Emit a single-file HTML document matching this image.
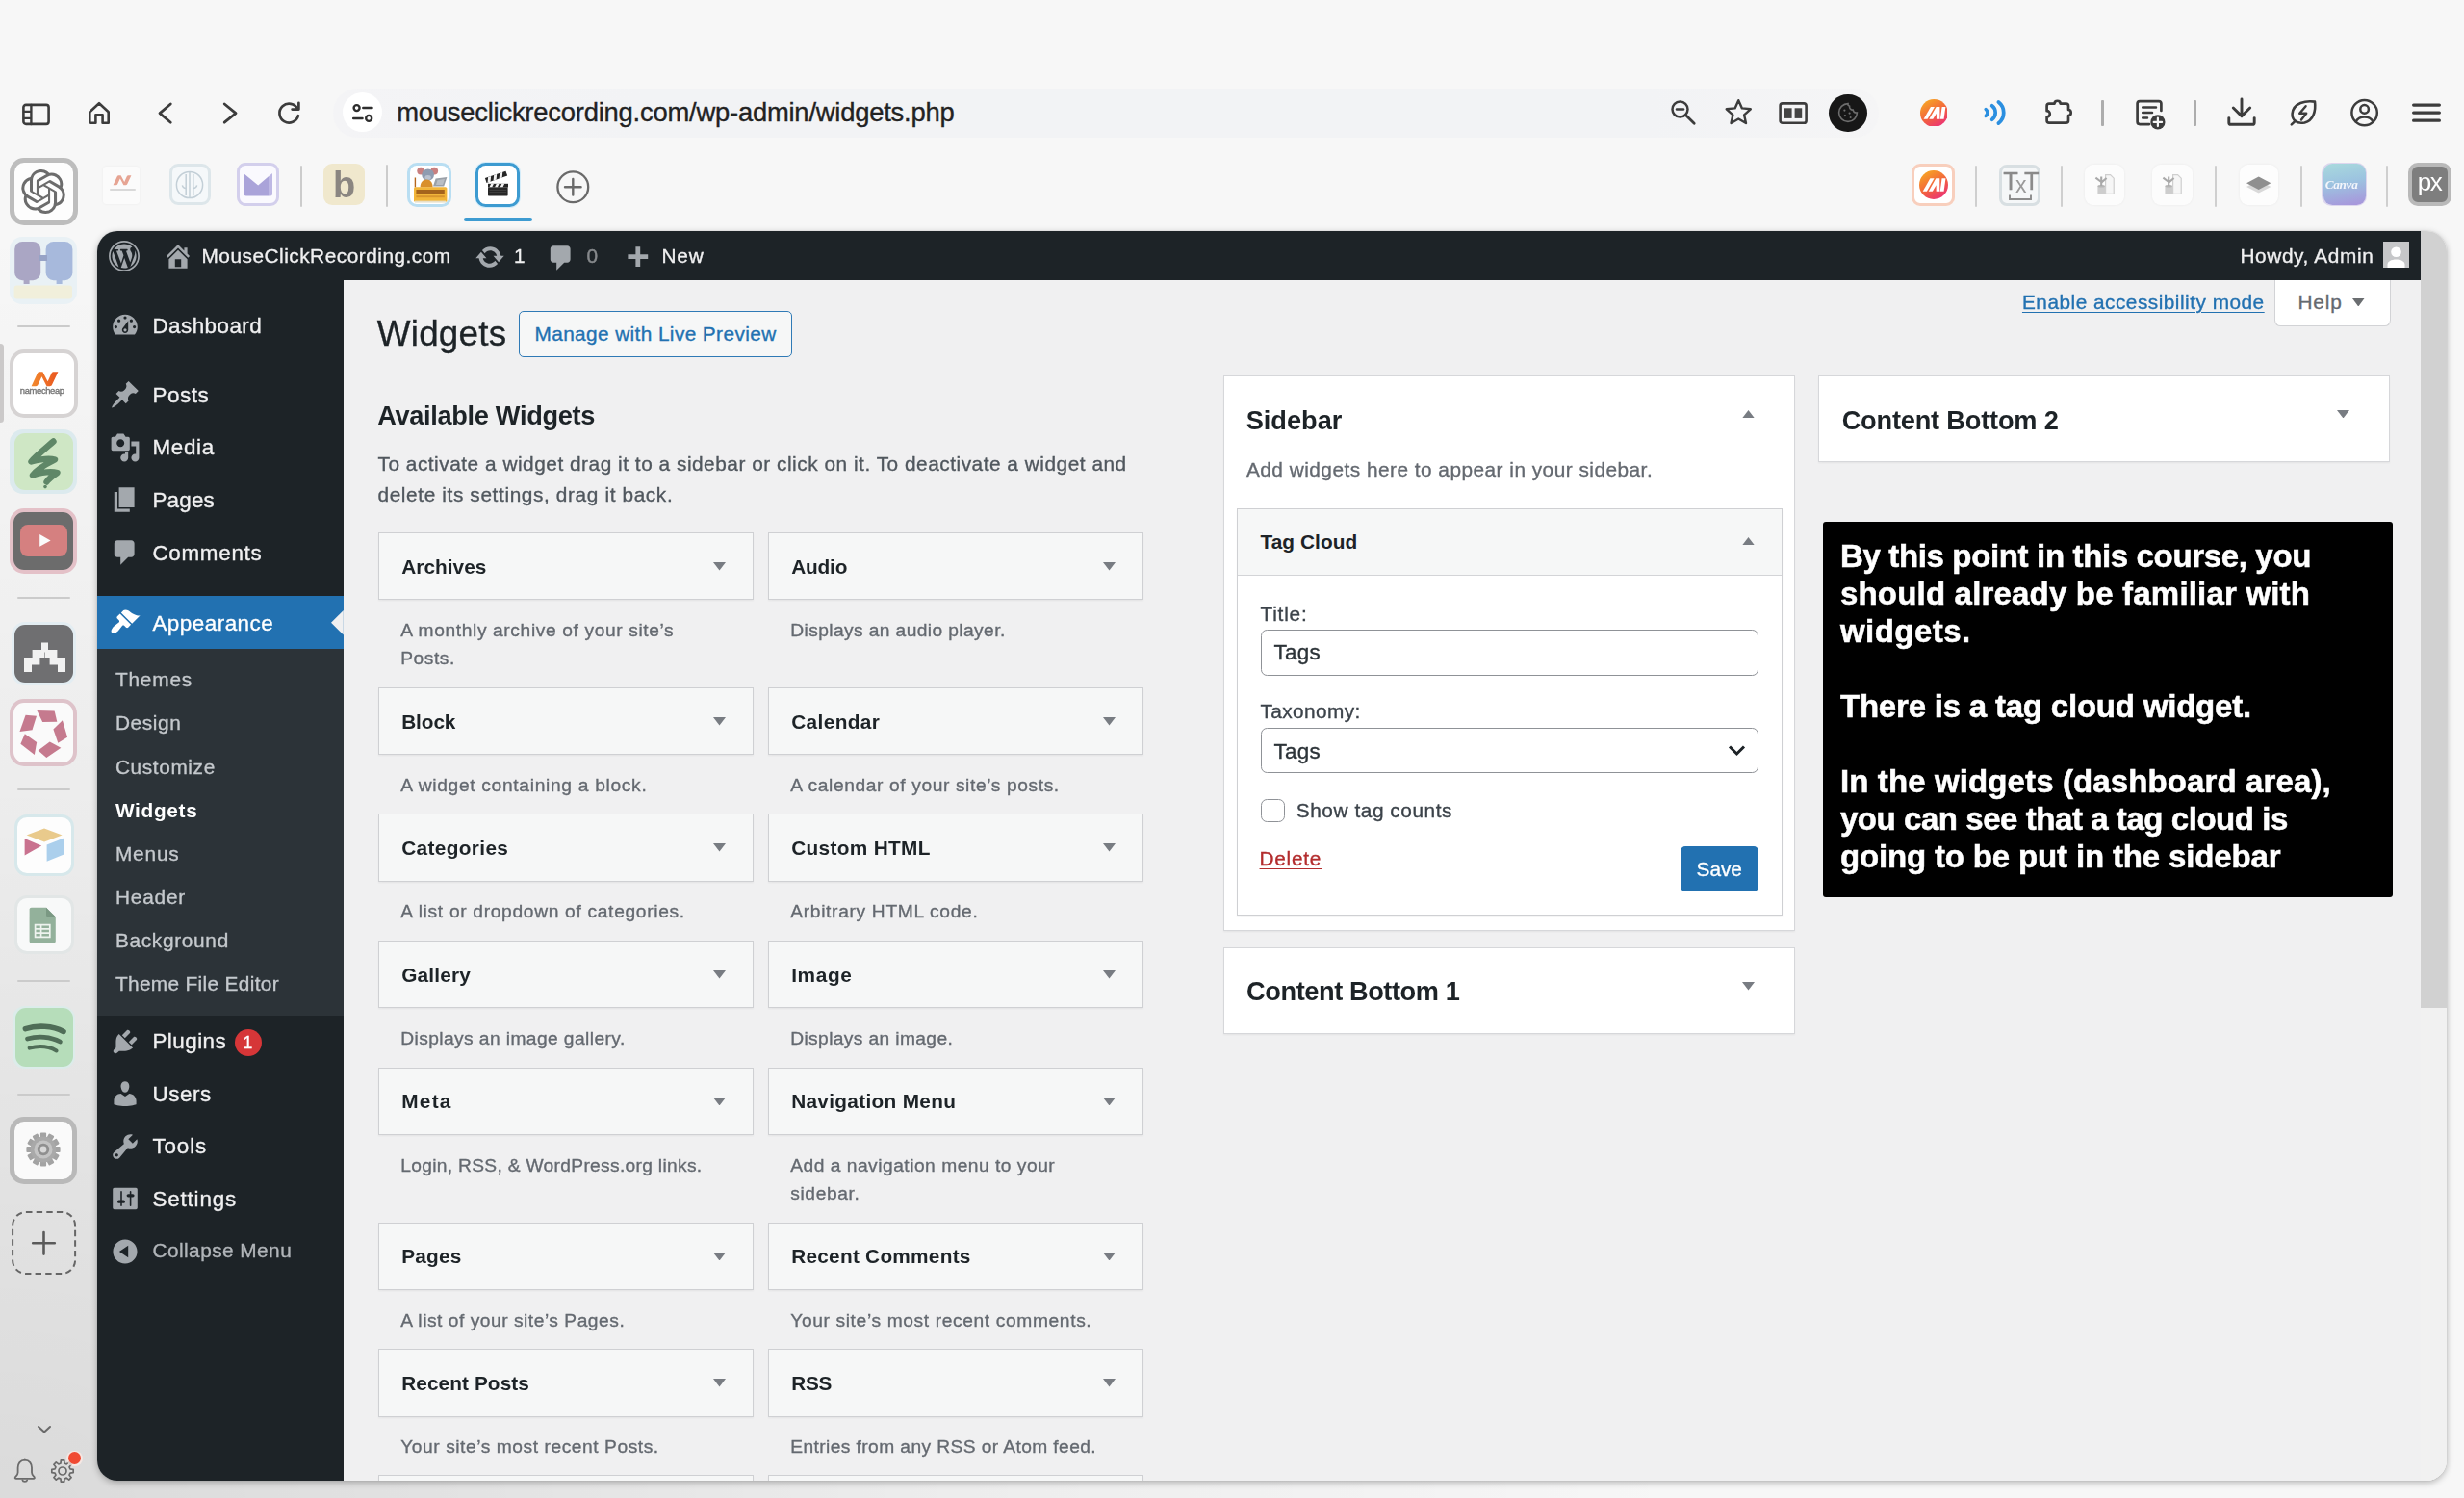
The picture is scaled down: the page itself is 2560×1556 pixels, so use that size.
<!DOCTYPE html>
<html><head><meta charset="utf-8"><title>Widgets</title>
<style>
html,body{margin:0;padding:0;}
body{width:2560px;height:1556px;position:relative;overflow:hidden;font-family:"Liberation Sans",sans-serif;
background:radial-gradient(ellipse 1750px 1350px at 0px 1580px,rgba(0,0,0,.118) 0%,rgba(0,0,0,.085) 25%,rgba(0,0,0,.045) 55%,rgba(0,0,0,0) 100%),#f7f7f7;}
#sidegrad{display:none;}
#all{position:absolute;left:0;top:0;width:2560px;height:1556px;filter:blur(.5px);}
#shadow{position:absolute;left:101px;top:240px;width:2441px;height:1298px;border-radius:21px;box-shadow:0 2px 7px rgba(0,0,0,.28),0 0 1px rgba(0,0,0,.3);}
#frame{position:absolute;left:0;top:0;width:2560px;height:1556px;clip-path:inset(240px 18px 18px 101px round 21px);}
</style></head><body>
<div id="sidegrad"></div>
<div id="all">
<div style="position:absolute;left:346.00px;top:92.00px;width:1606.00px;height:51.00px;box-sizing:border-box;background:linear-gradient(90deg,#f4f4f6 0%,#f2f3f5 20%,#f2f3f5 85%,#f5f5f6 100%);border-radius:25px;"></div>
<svg style="position:absolute;left:20.00px;top:104.00px;" width="36" height="30" viewBox="0 0 36 30"><rect x="4.4" y="4.9" width="26.2" height="20" rx="2.6" fill="none" stroke="#3c3c3c" stroke-width="2.6" stroke-linecap="round" stroke-linejoin="round" /><path d="M12.4 5v20" fill="none" stroke="#3c3c3c" stroke-width="2.4" stroke-linecap="round" stroke-linejoin="round" /><path d="M5 11.9h6M5 18.9h6" fill="none" stroke="#3c3c3c" stroke-width="2.4" stroke-linecap="round" stroke-linejoin="round" /></svg>
<svg style="position:absolute;left:88.00px;top:102.00px;" width="30" height="30" viewBox="0 0 30 30"><path d="M5.3 14.2L15 5.2L24.7 14.2V25.7H18.6V17.3H11.4V25.7H5.3Z" fill="none" stroke="#3c3c3c" stroke-width="2.6" stroke-linecap="round" stroke-linejoin="round" /></svg>
<svg style="position:absolute;left:160.00px;top:102.00px;" width="24" height="32" viewBox="0 0 24 32"><path d="M17.3 6L6 15.6L17.3 25.2" fill="none" stroke="#3c3c3c" stroke-width="2.8" stroke-linecap="round" stroke-linejoin="round" /></svg>
<svg style="position:absolute;left:227.00px;top:102.00px;" width="24" height="32" viewBox="0 0 24 32"><path d="M6.2 6L18 15.6L6.2 25.2" fill="none" stroke="#3c3c3c" stroke-width="2.8" stroke-linecap="round" stroke-linejoin="round" /></svg>
<svg style="position:absolute;left:285.00px;top:102.00px;" width="32" height="32" viewBox="0 0 32 32"><path d="M24.2 11.2A9.9 9.9 0 1 0 24.9 18.2" fill="none" stroke="#3c3c3c" stroke-width="2.7" stroke-linecap="round" stroke-linejoin="round" /><path d="M25.4 4.8V11.6H18.6" fill="none" stroke="#3c3c3c" stroke-width="2.7" stroke-linecap="round" stroke-linejoin="round" /></svg>
<div style="position:absolute;left:356.30px;top:96.10px;width:41.00px;height:41.00px;box-sizing:border-box;background:#fff;border-radius:50%;"></div>
<svg style="position:absolute;left:360.00px;top:102.00px;" width="34" height="30" viewBox="0 0 34 30"><circle cx="10.6" cy="10.1" r="3" fill="none" stroke="#2e2e2e" stroke-width="2.4" stroke-linecap="round" stroke-linejoin="round" /><path d="M17.3 10.1H26.5" fill="none" stroke="#2e2e2e" stroke-width="2.5" stroke-linecap="round" stroke-linejoin="round" /><path d="M7.2 20.9H16.5" fill="none" stroke="#2e2e2e" stroke-width="2.5" stroke-linecap="round" stroke-linejoin="round" /><circle cx="23.2" cy="20.9" r="3" fill="none" stroke="#2e2e2e" stroke-width="2.4" stroke-linecap="round" stroke-linejoin="round" /></svg>
<div style="position:absolute;top:103.00px;font-size:27.4px;line-height:1;color:#222;white-space:pre;left:412.13px;-webkit-text-stroke:0.35px #222;letter-spacing:-0.222px;">mouseclickrecording.com/wp-admin/widgets.php</div>
<svg style="position:absolute;left:1732.00px;top:100.00px;" width="34" height="34" viewBox="0 0 34 34"><circle cx="13.5" cy="13.6" r="8" fill="none" stroke="#3c3c3c" stroke-width="2.5" stroke-linecap="round" stroke-linejoin="round" /><path d="M19.4 19.6L28.2 28.2" fill="none" stroke="#3c3c3c" stroke-width="2.8" stroke-linecap="round" stroke-linejoin="round" /><path d="M10 13.6h7" fill="none" stroke="#3c3c3c" stroke-width="2.5" stroke-linecap="round" stroke-linejoin="round" /></svg>
<svg style="position:absolute;left:1790.00px;top:100.00px;" width="34" height="34" viewBox="0 0 34 34"><path d="M16.25 4.2L19.9 12.4L28.8 13.3L22.1 19.3L24 28L16.25 23.5L8.5 28L10.4 19.3L3.7 13.3L12.6 12.4Z" fill="none" stroke="#3c3c3c" stroke-width="2.4" stroke-linecap="round" stroke-linejoin="round" /></svg>
<svg style="position:absolute;left:1845.00px;top:102.00px;" width="36" height="30" viewBox="0 0 36 30"><rect x="4.6" y="5.4" width="27" height="20.4" rx="2.4" fill="none" stroke="#3c3c3c" stroke-width="2.6" stroke-linecap="round" stroke-linejoin="round" /><rect x="9" y="10.3" width="7.6" height="10.6" fill="#444"/><rect x="19.6" y="10.3" width="7.6" height="10.6" fill="#444"/></svg>
<div style="position:absolute;left:1900.40px;top:97.50px;width:39.20px;height:39.20px;box-sizing:border-box;background:#171717;border-radius:50%;"></div>
<svg style="position:absolute;left:1906.00px;top:103.00px;" width="28" height="28" viewBox="0 0 28 28"><path d="M14 4.6a9.4 9.4 0 1 0 9.4 9.4c-2.2 0.3-3.9-1-4.2-2.9c-2.2 0.2-4-1.6-3.6-3.9C14.3 6.8 13.7 5.6 14 4.6Z" fill="none" stroke="#6d6d6d" stroke-width="1.6"/><circle cx="10.4" cy="11.6" r="1.1" fill="#6d6d6d"/><circle cx="10.9" cy="17.1" r="1.1" fill="#6d6d6d"/><circle cx="15.6" cy="14.6" r="1.1" fill="#6d6d6d"/><circle cx="16.6" cy="19.1" r="1.0" fill="#6d6d6d"/></svg>
<svg style="position:absolute;left:1994.60px;top:102.70px;" width="28.8" height="28.8" viewBox="0 0 28.8 28.8"><defs><linearGradient id="g1" x1="0.2" y1="0" x2="0.8" y2="1"><stop offset="0" stop-color="#f7a823"/><stop offset=".55" stop-color="#f2603f"/><stop offset="1" stop-color="#ea2f7b"/></linearGradient></defs><circle cx="14.4" cy="14.4" r="14.4" fill="url(#g1)"/><g fill="#fff" transform="translate(14.688,14.4) scale(1.1712)"><path d="M-9.5 5.5L-3.2 -5.5H0.2L-6.1 5.5Z"/><path d="M-4.6 5.5L1.7 -5.5H4.9V5.5H1.9V0.2L-1.2 5.5Z"/><path d="M6.0 5.5V-5.5H9.2V5.5Z" transform="skewX(-8)"/></g></svg>
<svg style="position:absolute;left:2056.00px;top:100.00px;" width="34" height="34" viewBox="0 0 34 34"><g fill="none" stroke="#2b8fe0" stroke-linecap="round"><path d="M7.2 13.6a4.2 4.2 0 0 1 0 6.8" stroke-width="3.6"/><path d="M13.6 9.8a9 9 0 0 1 0 14.4" stroke-width="3.7"/><path d="M20.4 6a14 14 0 0 1 0 22" stroke-width="3.8"/></g></svg>
<svg style="position:absolute;left:2120.00px;top:98.00px;" width="38" height="36" viewBox="0 0 38 36"><path d="M9 9.6H14.6C14.6 5.8 20.6 5.8 20.6 9.6H26.6C28 9.6 29 10.6 29 12V16C32.6 16 32.6 22 29 22V27.2C29 28.6 28 29.6 26.6 29.6H9C7.6 29.6 6.6 28.6 6.6 27.2V23.4C10.8 23.6 10.8 17 6.6 17.2V12C6.6 10.6 7.6 9.6 9 9.6Z" fill="none" stroke="#3c3c3c" stroke-width="2.7" stroke-linecap="round" stroke-linejoin="round" /></svg>
<div style="position:absolute;left:2183.20px;top:103.50px;width:2.80px;height:27.00px;box-sizing:border-box;background:#adadad;border-radius:1px;"></div>
<svg style="position:absolute;left:2214.00px;top:98.00px;" width="40" height="40" viewBox="0 0 40 40"><path d="M31.4 17V9.6C31.4 8.1 30.4 7.1 28.9 7.1H9.1C7.6 7.1 6.6 8.1 6.6 9.6V28.6C6.6 30.1 7.6 31.1 9.1 31.1H19" fill="none" stroke="#3c3c3c" stroke-width="2.7" stroke-linecap="round" stroke-linejoin="round" /><path d="M12.2 13.6H26M12.2 19.1H22M12.2 24.6H17" fill="none" stroke="#3c3c3c" stroke-width="2.5" stroke-linecap="round" stroke-linejoin="round" /><circle cx="27.9" cy="28.9" r="7.6" fill="#3c3c3c"/><path d="M27.9 24.7v8.4M23.7 28.9h8.4" stroke="#f7f7f7" stroke-width="2.2" stroke-linecap="round"/></svg>
<div style="position:absolute;left:2279.30px;top:103.50px;width:2.80px;height:27.00px;box-sizing:border-box;background:#adadad;border-radius:1px;"></div>
<svg style="position:absolute;left:2310.00px;top:98.00px;" width="38" height="36" viewBox="0 0 38 36"><path d="M19 5V22M10.3 14L19 22.6L27.7 14" fill="none" stroke="#3c3c3c" stroke-width="2.9" stroke-linecap="round" stroke-linejoin="round" /><path d="M5.8 24.6V29.4C5.8 30.5 6.6 31.3 7.7 31.3H30.3C31.4 31.3 32.2 30.5 32.2 29.4V24.6" fill="none" stroke="#3c3c3c" stroke-width="2.9" stroke-linecap="round" stroke-linejoin="round" /></svg>
<svg style="position:absolute;left:2374.00px;top:98.00px;" width="38" height="38" viewBox="0 0 38 38"><path d="M31 7.6C22 6.2 8.4 8.6 7.6 20.2C7.4 23.4 8.6 26 10.6 27.8C13 29.6 16.6 30.2 20.4 29.4C29.6 27.2 32.2 17 31 7.6Z" fill="none" stroke="#3c3c3c" stroke-width="2.6" stroke-linecap="round" stroke-linejoin="round" /><path d="M10.8 27.6L6.8 31.4" fill="none" stroke="#3c3c3c" stroke-width="2.6" stroke-linecap="round" stroke-linejoin="round" /><path d="M21.6 12.2L15.2 19.8H22.2L17 26.6" fill="none" stroke="#3c3c3c" stroke-width="2.4" stroke-linecap="round" stroke-linejoin="round" /></svg>
<svg style="position:absolute;left:2440.00px;top:100.00px;" width="34" height="34" viewBox="0 0 34 34"><circle cx="16.6" cy="17.1" r="13.2" fill="none" stroke="#3c3c3c" stroke-width="2.5" stroke-linecap="round" stroke-linejoin="round" /><circle cx="16.6" cy="13.4" r="4.3" fill="none" stroke="#3c3c3c" stroke-width="2.5" stroke-linecap="round" stroke-linejoin="round" /><path d="M7.6 26.4C9.6 22.6 12.8 21.4 16.6 21.4C20.4 21.4 23.6 22.6 25.6 26.4" fill="none" stroke="#3c3c3c" stroke-width="2.5" stroke-linecap="round" stroke-linejoin="round" /></svg>
<svg style="position:absolute;left:2504.00px;top:104.00px;" width="34" height="26" viewBox="0 0 34 26"><path d="M3.6 5.1H30.4M3.6 13.1H30.4M3.6 21.2H30.4" fill="none" stroke="#3c3c3c" stroke-width="3.2" stroke-linecap="round" stroke-linejoin="round" /></svg>
<div style="position:absolute;left:107.00px;top:173.00px;width:37.60px;height:39.00px;box-sizing:border-box;background:#fbfbfb;border-radius:4px;box-shadow:0 0 3px rgba(0,0,0,.05);"></div>
<svg style="position:absolute;left:117.00px;top:181.00px;" width="20" height="12" viewBox="0 0 20 12"><path d="M0.6 11.2L4.8 2.2C5.1 1.5 5.6 1.2 6.3 1.2H8.6L12.2 8L14.8 2.2C15.1 1.5 15.6 1.2 16.3 1.2H19.4L15.2 10.2C14.9 10.9 14.4 11.2 13.7 11.2H11.4L7.8 4.4L5.2 10.2C4.9 10.9 4.4 11.2 3.7 11.2Z" fill="#e6a493"/></svg>
<div style="position:absolute;left:113.50px;top:195.60px;width:27.00px;height:2.20px;box-sizing:border-box;background:#d9d9d9;border-radius:1px;"></div>
<div style="position:absolute;left:176.00px;top:170.20px;width:42.70px;height:42.80px;box-sizing:border-box;background:#f5f8fa;border:3px solid #dde6ea;border-radius:9px;"></div>
<svg style="position:absolute;left:181.00px;top:175.60px;" width="32" height="32" viewBox="0 0 32 32"><g fill="none" stroke="#c3cfd7" stroke-width="1.5"><circle cx="16" cy="16" r="13.6"/><path d="M16 2.6V29.4M12.2 5V27M19.8 5V27M8.4 16.4a3.4 3.4 0 0 0 3.8 3M23.6 16.4a3.4 3.4 0 0 1-3.8 3"/></g></svg>
<div style="position:absolute;left:246.00px;top:169.30px;width:44.40px;height:44.80px;box-sizing:border-box;background:#faf9fe;border:3.4px solid #d3cfec;border-radius:9px;"></div>
<svg style="position:absolute;left:252.00px;top:178.00px;" width="33" height="27" viewBox="0 0 33 27"><path d="M1.6 2.4L16.2 14.4L27 5.2V25.4H3.6C2.5 25.4 1.6 24.5 1.6 23.4Z" fill="#aaa3d9"/><path d="M27 5.2L31 2V23.4C31 24.5 30.1 25.4 29 25.4H27Z" fill="#beb8e4"/></svg>
<div style="position:absolute;left:311.50px;top:172.00px;width:2.00px;height:42.80px;box-sizing:border-box;background:#cccccc;border-radius:1px;"></div>
<div style="position:absolute;left:335.70px;top:170.20px;width:43.00px;height:42.80px;box-sizing:border-box;background:#f0e8cd;border-radius:9px;"></div>
<div style="position:absolute;top:173.00px;font-size:38px;line-height:1;color:#8b8681;white-space:pre;left:345.99px;font-weight:700;">b</div>
<div style="position:absolute;left:400.50px;top:171.00px;width:2.00px;height:44.00px;box-sizing:border-box;background:#cccccc;border-radius:1px;"></div>
<div style="position:absolute;left:423.40px;top:168.60px;width:46.00px;height:46.20px;box-sizing:border-box;background:#fff;border:3px solid #b9def2;border-radius:10px;"></div>
<svg style="position:absolute;left:426.40px;top:171.60px;" width="40" height="40" viewBox="0 0 40 40"><path d="M5.4 22.5V12.5" stroke="#b5651d" stroke-width="1.4" fill="none"/><circle cx="11.2" cy="5.6" r="3.9" fill="#c98080"/><circle cx="25.2" cy="5.6" r="3.9" fill="#c98080"/><ellipse cx="18.6" cy="9.6" rx="6.4" ry="6.2" fill="#8f9bb0"/><ellipse cx="18.6" cy="12.4" rx="3.2" ry="2.4" fill="#b9c1cf"/><path d="M10.6 22.6C10.6 17.6 13.2 14.6 17.2 14.6C21.2 14.6 23.6 17.6 23.6 22.6Z" fill="#d98f2b"/><path d="M26.6 13.6L38.4 12L35.2 21.6H24Z" fill="#9aa0a8"/><path d="M28.6 15L36 14L34 20H27Z" fill="#b9bec5"/><rect x="4" y="22.2" width="34.4" height="15.6" rx="1.6" fill="#f2b53a"/><rect x="6.4" y="25" width="29.4" height="4.2" fill="#a5631c"/><rect x="6.4" y="31.2" width="29.4" height="2" fill="#d9952d"/><rect x="5" y="36.6" width="32" height="2" fill="#e8e0c8"/></svg>
<div style="position:absolute;left:493.20px;top:168.20px;width:48.00px;height:47.60px;box-sizing:border-box;border-radius:11.5px;background:#d4ecf9;"></div>
<div style="position:absolute;left:494.00px;top:169.00px;width:46.40px;height:46.00px;box-sizing:border-box;background:#fff;border:3.7px solid #3d9bd1;border-radius:10.5px;"></div>
<svg style="position:absolute;left:500.00px;top:176.00px;" width="34" height="32" viewBox="0 0 34 32"><g transform="rotate(-19 7 15)"><rect x="6" y="8.4" width="22.8" height="5.2" fill="#262626"/><path d="M9.4 8.4h3.2l-2.4 5.2H7zM15.8 8.4h3.2l-2.4 5.2h-3.2zM22.2 8.4h3.2l-2.4 5.2h-3.2z" fill="#f2f2f2"/></g><rect x="7" y="14.8" width="21" height="3.8" fill="#262626"/><path d="M10.2 14.8h2.8l-1.8 3.8H8.4zM15.8 14.8h2.8l-1.8 3.8H14zM21.4 14.8h2.8l-1.8 3.8h-2.8z" fill="#f2f2f2"/><rect x="7" y="18.6" width="20.6" height="9" rx="0.8" fill="#262626"/><path d="M8.4 21.4h17.8M8.4 23.6h17.8M8.4 25.6h17.8" stroke="#4a4a4a" stroke-width=".7"/></svg>
<div style="position:absolute;left:481.80px;top:225.80px;width:71.20px;height:4.00px;box-sizing:border-box;background:#3d9bd1;border-radius:2px;"></div>
<svg style="position:absolute;left:576.00px;top:174.50px;" width="38" height="38" viewBox="0 0 38 38"><circle cx="19.3" cy="19.3" r="15.9" fill="none" stroke="#6a6a6a" stroke-width="2.3" stroke-linecap="round" stroke-linejoin="round" /><path d="M19.3 11V27.6M11 19.3H27.6" fill="none" stroke="#6a6a6a" stroke-width="2.4" stroke-linecap="round" stroke-linejoin="round" /></svg>
<div style="position:absolute;left:1986.30px;top:169.50px;width:45.00px;height:44.40px;box-sizing:border-box;background:#fff;border:3px solid #f8cfbd;border-radius:9px;"></div>
<svg style="position:absolute;left:1993.80px;top:176.80px;" width="30" height="30" viewBox="0 0 30 30"><defs><linearGradient id="g2" x1="0.2" y1="0" x2="0.8" y2="1"><stop offset="0" stop-color="#f7a823"/><stop offset=".55" stop-color="#f2603f"/><stop offset="1" stop-color="#ea2f7b"/></linearGradient></defs><circle cx="15" cy="15" r="15" fill="url(#g2)"/><g fill="#fff" transform="translate(15.3,15) scale(1.22)"><path d="M-9.5 5.5L-3.2 -5.5H0.2L-6.1 5.5Z"/><path d="M-4.6 5.5L1.7 -5.5H4.9V5.5H1.9V0.2L-1.2 5.5Z"/><path d="M6.0 5.5V-5.5H9.2V5.5Z" transform="skewX(-8)"/></g></svg>
<div style="position:absolute;left:2052.30px;top:171.50px;width:2.00px;height:43.50px;box-sizing:border-box;background:#cfcfcf;border-radius:1px;"></div>
<div style="position:absolute;left:2077.00px;top:170.60px;width:42.60px;height:43.20px;box-sizing:border-box;background:#f5f7f8;border:3px solid #d8dfe2;border-radius:8px;"></div>
<div style="position:absolute;top:176.00px;font-size:25.5px;line-height:1;color:#8a8a8a;white-space:pre;left:2081.31px;-webkit-text-stroke:0.3px #8a8a8a;">T</div>
<div style="position:absolute;top:176.00px;font-size:25.5px;line-height:1;color:#8a8a8a;white-space:pre;left:2102.91px;-webkit-text-stroke:0.3px #8a8a8a;">T</div>
<div style="position:absolute;top:181.00px;font-size:23px;line-height:1;color:#9a9a9a;white-space:pre;left:2094.05px;">x</div>
<svg style="position:absolute;left:2086.00px;top:201.00px;" width="26" height="9" viewBox="0 0 26 9"><path d="M2 1.4V6H24V1.4" fill="none" stroke="#8c8c8c" stroke-width="1.9"/></svg>
<div style="position:absolute;left:2141.10px;top:171.50px;width:2.00px;height:43.50px;box-sizing:border-box;background:#cfcfcf;border-radius:1px;"></div>
<div style="position:absolute;left:2165.80px;top:171.00px;width:41.40px;height:42.00px;box-sizing:border-box;background:#fcfcfc;border-radius:9px;box-shadow:0 0 3px rgba(0,0,0,.06);"></div>
<svg style="position:absolute;left:2171.80px;top:176.50px;" width="30" height="30" viewBox="0 0 30 30"><path d="M15.6 4.6H20.6L24.2 8.2V24.4H15.6Z" fill="#f6f6f6" stroke="#cfcfcf" stroke-width="1.2"/><path d="M7.4 24.6V16.2H15V24.6Z" fill="#cdcdcd"/><ellipse cx="11.2" cy="16.2" rx="3.8" ry="1.3" fill="#b5b5b5"/><path d="M11.2 16V6.4M11.2 12L5.4 7.6M11.2 12.6L16.6 8" stroke="#a9a9a9" stroke-width="2.1" fill="none"/></svg>
<div style="position:absolute;left:2236.40px;top:171.00px;width:41.40px;height:42.00px;box-sizing:border-box;background:#fcfcfc;border-radius:9px;box-shadow:0 0 3px rgba(0,0,0,.06);"></div>
<svg style="position:absolute;left:2242.40px;top:176.50px;" width="30" height="30" viewBox="0 0 30 30"><path d="M15.6 4.6H20.6L24.2 8.2V24.4H15.6Z" fill="#f6f6f6" stroke="#cfcfcf" stroke-width="1.2"/><path d="M7.4 24.6V16.2H15V24.6Z" fill="#cdcdcd"/><ellipse cx="11.2" cy="16.2" rx="3.8" ry="1.3" fill="#b5b5b5"/><path d="M11.2 16V6.4M11.2 12L5.4 7.6M11.2 12.6L16.6 8" stroke="#a9a9a9" stroke-width="2.1" fill="none"/></svg>
<div style="position:absolute;left:2301.10px;top:171.50px;width:2.00px;height:43.50px;box-sizing:border-box;background:#cfcfcf;border-radius:1px;"></div>
<div style="position:absolute;left:2326.50px;top:171.00px;width:40.40px;height:42.00px;box-sizing:border-box;background:#fdfdfd;border-radius:9px;box-shadow:0 0 3px rgba(0,0,0,.06);"></div>
<svg style="position:absolute;left:2331.00px;top:178.00px;" width="32" height="26" viewBox="0 0 32 26"><path d="M15.7 9.6L28.4 16L15.7 22.4L3 16Z" fill="#d9d9d9"/><path d="M15.7 5.4L28.4 12.2L15.7 19L3 12.2Z" fill="#8f8f8f"/></svg>
<div style="position:absolute;left:2390.00px;top:171.50px;width:2.00px;height:43.50px;box-sizing:border-box;background:#cfcfcf;border-radius:1px;"></div>
<div style="position:absolute;left:2412.40px;top:168.60px;width:46.20px;height:45.60px;box-sizing:border-box;border-radius:10.5px;background:#dcd6ee;"></div>
<div style="position:absolute;left:2413.60px;top:169.60px;width:44.00px;height:43.60px;box-sizing:border-box;background:linear-gradient(170deg,#a9dadd 0%,#9cc3e0 45%,#a893db 100%);border-radius:9.5px;"></div>
<div style="position:absolute;top:185.00px;font-size:13.2px;line-height:1;color:#f3f6fb;white-space:pre;left:2415.79px;font-weight:700;font-family:'Liberation Serif',serif;font-style:italic;letter-spacing:-.3px;">Canva</div>
<div style="position:absolute;left:2479.00px;top:171.50px;width:2.00px;height:43.50px;box-sizing:border-box;background:#cfcfcf;border-radius:1px;"></div>
<div style="position:absolute;left:2501.80px;top:169.00px;width:45.50px;height:45.00px;box-sizing:border-box;background:#7e7e7e;border:4px solid #b9b9b9;border-radius:10px;"></div>
<div style="position:absolute;top:176.00px;font-size:26px;line-height:1;color:#fff;white-space:pre;left:2511.87px;letter-spacing:-1.6px;">px</div><div style="position:absolute;left:10.00px;top:163.60px;width:70.60px;height:70.20px;box-sizing:border-box;background:#fdfdfd;border:5px solid #bdbdbd;border-radius:15px;"></div>
<svg style="position:absolute;left:21.60px;top:175.60px;" width="46" height="46" viewBox="0 0 24 24"><path fill="#6c6c6c" d="M22.2819 9.8211a5.9847 5.9847 0 0 0-.5157-4.9108 6.0462 6.0462 0 0 0-6.5098-2.9A6.0651 6.0651 0 0 0 4.9807 4.1818a5.9847 5.9847 0 0 0-3.9977 2.9 6.0462 6.0462 0 0 0 .7427 7.0966 5.98 5.98 0 0 0 .511 4.9107 6.051 6.051 0 0 0 6.5146 2.9001A5.9847 5.9847 0 0 0 13.2599 24a6.0557 6.0557 0 0 0 5.7718-4.2058 5.9894 5.9894 0 0 0 3.9977-2.9001 6.0557 6.0557 0 0 0-.7475-7.0729zm-9.022 12.6081a4.4755 4.4755 0 0 1-2.8764-1.0408l.1419-.0804 4.7783-2.7582a.7948.7948 0 0 0 .3927-.6813v-6.7369l2.02 1.1686a.071.071 0 0 1 .038.052v5.5826a4.504 4.504 0 0 1-4.4945 4.4944zm-9.6607-4.1254a4.4708 4.4708 0 0 1-.5346-3.0137l.142.0852 4.783 2.7582a.7712.7712 0 0 0 .7806 0l5.8428-3.3685v2.3324a.0804.0804 0 0 1-.0332.0615L9.74 19.9502a4.4992 4.4992 0 0 1-6.1408-1.6464zM2.3408 7.8956a4.485 4.485 0 0 1 2.3655-1.9728V11.6a.7664.7664 0 0 0 .3879.6765l5.8144 3.3543-2.0201 1.1685a.0757.0757 0 0 1-.071 0l-4.8303-2.7865A4.504 4.504 0 0 1 2.3408 7.872zm16.5963 3.8558L13.1038 8.364 15.1192 7.2a.0757.0757 0 0 1 .071 0l4.8303 2.7913a4.4944 4.4944 0 0 1-.6765 8.1042v-5.6772a.79.79 0 0 0-.407-.667zm2.0107-3.0231l-.142-.0852-4.7735-2.7818a.7759.7759 0 0 0-.7854 0L9.409 9.2297V6.8974a.0662.0662 0 0 1 .0284-.0615l4.8303-2.7866a4.4992 4.4992 0 0 1 6.6802 4.66zM8.3065 12.863l-2.02-1.1638a.0804.0804 0 0 1-.038-.0567V6.0742a4.4992 4.4992 0 0 1 7.3757-3.4537l-.142.0805L8.704 5.459a.7948.7948 0 0 0-.3927.6813zm1.0976-2.3654l2.602-1.4998 2.6069 1.4998v2.9994l-2.5974 1.4997-2.6067-1.4997Z"/></svg>
<div style="position:absolute;left:10.40px;top:246.20px;width:69.60px;height:69.80px;box-sizing:border-box;background:#e9f1f5;border-radius:13px;"></div>
<svg style="position:absolute;left:10.40px;top:246.20px;" width="70" height="70" viewBox="0 0 70 70"><rect x="4.6" y="50.5" width="60.4" height="14" rx="3" fill="#f1efdb"/><rect x="14.6" y="40" width="6" height="9" fill="#aaa6c4"/><rect x="48.6" y="40" width="6" height="9" fill="#a7b9dc"/><rect x="5.2" y="5" width="27" height="40.2" rx="8" fill="#aaa6c4"/><rect x="37.6" y="5" width="27.8" height="40.2" rx="8" fill="#a7b9dc"/><rect x="31" y="19" width="8" height="6" fill="#97a3c6"/></svg>
<div style="position:absolute;left:18.00px;top:338.00px;width:54.50px;height:2.00px;box-sizing:border-box;background:#cbcbcb;border-radius:1px;"></div>
<div style="position:absolute;left:-3.00px;top:357.40px;width:7.40px;height:81.20px;box-sizing:border-box;background:#cbc9c9;border-radius:4px;"></div>
<div style="position:absolute;left:10.00px;top:363.40px;width:70.60px;height:70.20px;box-sizing:border-box;background:#fff;border:4.6px solid #d6d3d3;border-radius:15px;"></div>
<svg style="position:absolute;left:31.50px;top:384.50px;" width="29" height="17" viewBox="0 0 29 17"><defs><linearGradient id="nc" x1="0" y1="0" x2="1" y2="0"><stop offset="0" stop-color="#f28a2e"/><stop offset="1" stop-color="#e9551f"/></linearGradient></defs><path d="M0.6 16.2L7 2.6C7.5 1.6 8.2 1.2 9.2 1.2H12.4L17.6 11.2L21.6 2.6C22.1 1.6 22.8 1.2 23.8 1.2H28.4L22 14.8C21.5 15.8 20.8 16.2 19.8 16.2H16.6L11.4 6.2L7.4 14.8C6.9 15.8 6.2 16.2 5.2 16.2Z" fill="url(#nc)"/></svg>
<div style="position:absolute;top:401.00px;font-size:9.4px;line-height:1;color:#777;white-space:pre;left:20.84px;-webkit-text-stroke:0.35px #777;letter-spacing:-.35px;">namecheap</div>
<div style="position:absolute;left:10.20px;top:446.00px;width:70.00px;height:67.40px;box-sizing:border-box;background:#dceaee;border-radius:14px;"></div>
<div style="position:absolute;left:14.60px;top:450.00px;width:61.20px;height:59.40px;box-sizing:border-box;background:#cfe7c5;border-radius:11px;"></div>
<svg style="position:absolute;left:10.20px;top:446.00px;" width="70" height="68" viewBox="0 0 70 68"><path d="M45.5 12.5C38 19 27 28 22.5 33.5C30 31.5 40 29 47 31.5C38 36 28 41.5 24 47.5C32 45 42 43 49.5 45C45 48 41 51 38.5 54.5" fill="none" stroke="#5f8767" stroke-width="6.4" stroke-linecap="round" stroke-linejoin="round"/><circle cx="37" cy="59.6" r="1.8" fill="#5f8767"/></svg>
<div style="position:absolute;left:10.20px;top:527.50px;width:70.00px;height:68.70px;box-sizing:border-box;background:#6c6c6c;border:4.6px solid #e4c1c8;border-radius:15px;"></div>
<div style="position:absolute;left:21.40px;top:545.40px;width:48.60px;height:32.20px;box-sizing:border-box;background:#d58080;border-radius:8px;"></div>
<svg style="position:absolute;left:40.00px;top:554.40px;" width="14" height="15" viewBox="0 0 14 15"><path d="M1.2 1L12.6 7.4L1.2 13.8Z" fill="#fbfbfb"/></svg>
<div style="position:absolute;left:18.00px;top:619.50px;width:54.50px;height:2.00px;box-sizing:border-box;background:#cbcbcb;border-radius:1px;"></div>
<div style="position:absolute;left:11.60px;top:646.00px;width:67.80px;height:66.00px;box-sizing:border-box;background:#e3edf2;border-radius:14px;"></div>
<div style="position:absolute;left:14.60px;top:649.00px;width:61.80px;height:60.00px;box-sizing:border-box;background:#6f6f71;border-radius:11px;"></div>
<svg style="position:absolute;left:14.60px;top:649.00px;" width="62" height="60" viewBox="0 0 62 60"><path d="M10 49V34H18.6V26H28V18.4H35V26H44.4V34H53V49H45V41.6H36.6V34H31.6V28.4H31V34H26.4V41.6H18V49Z" fill="#f1f1f1"/></svg>
<div style="position:absolute;left:10.20px;top:726.00px;width:70.00px;height:69.50px;box-sizing:border-box;background:#fafafa;border:4.6px solid #dec3ca;border-radius:15px;"></div>
<svg style="position:absolute;left:20.20px;top:736.80px;" width="50" height="50" viewBox="0 0 50 50"><g transform="translate(24.6 24.4)"><path d="M-8.6 -22.6L9.6 -24L13.4 -13.2L-1.6 -11.4Z" fill="#c57a8e" transform="rotate(6)"/><path d="M-8.6 -22.6L9.6 -24L13.4 -13.2L-1.6 -11.4Z" fill="#c57a8e" transform="rotate(78)"/><path d="M-8.6 -22.6L9.6 -24L13.4 -13.2L-1.6 -11.4Z" fill="#c57a8e" transform="rotate(150)"/><path d="M-8.6 -22.6L9.6 -24L13.4 -13.2L-1.6 -11.4Z" fill="#c57a8e" transform="rotate(222)"/><path d="M-8.6 -22.6L9.6 -24L13.4 -13.2L-1.6 -11.4Z" fill="#c57a8e" transform="rotate(294)"/></g></svg>
<div style="position:absolute;left:18.00px;top:819.00px;width:54.50px;height:2.00px;box-sizing:border-box;background:#cbcbcb;border-radius:1px;"></div>
<div style="position:absolute;left:14.60px;top:846.00px;width:62.40px;height:63.50px;box-sizing:border-box;background:#fdfdfd;border:3.2px solid #d7e8eb;border-radius:13px;"></div>
<svg style="position:absolute;left:22.00px;top:858.00px;" width="48" height="40" viewBox="0 0 48 40"><path d="M24 2.4L42.6 9.4L24 16.4L5.6 9.4Z" fill="#e9ca8c"/><path d="M26.6 19.6L44.4 12.6V29.6L26.6 36.8Z" fill="#abcfec"/><path d="M3.6 13L21.2 20.6L3.6 30.6Z" fill="#c9728f"/></svg>
<div style="position:absolute;left:14.60px;top:930.40px;width:62.40px;height:60.40px;box-sizing:border-box;background:#f8f9f9;border:3.2px solid #e2e6e6;border-radius:13px;"></div>
<svg style="position:absolute;left:30.00px;top:941.60px;" width="30" height="38" viewBox="0 0 30 38"><path d="M2.6 0.8H18L27.8 10.6V35.4C27.8 36.5 26.9 37.4 25.8 37.4H2.6C1.5 37.4 0.6 36.5 0.6 35.4V2.8C0.6 1.7 1.5 0.8 2.6 0.8Z" fill="#93b19b"/><path d="M18 0.8L27.8 10.6H20C18.9 10.6 18 9.7 18 8.6Z" fill="#7a9883"/><path d="M6.6 18.6H21.8V31.4H6.6ZM6.6 22.9H21.8M6.6 27.1H21.8M12.6 18.6V31.4" fill="none" stroke="#eef3ef" stroke-width="1.7"/></svg>
<div style="position:absolute;left:18.00px;top:1017.50px;width:54.50px;height:2.00px;box-sizing:border-box;background:#cbcbcb;border-radius:1px;"></div>
<div style="position:absolute;left:13.40px;top:1045.40px;width:64.40px;height:64.60px;box-sizing:border-box;background:#dcecea;border-radius:13px;"></div>
<div style="position:absolute;left:15.60px;top:1047.40px;width:60.20px;height:60.60px;box-sizing:border-box;background:#b6ddba;border-radius:11px;"></div>
<svg style="position:absolute;left:15.60px;top:1047.40px;" width="60" height="60" viewBox="0 0 60 60"><g fill="none" stroke="#4f6d57" stroke-linecap="round"><path d="M10.4 21.6C23 17.6 38.6 18.4 50 24.4" stroke-width="5.6"/><path d="M12.6 32C23.6 28.8 36.6 29.6 46.4 35" stroke-width="4.8"/><path d="M14.6 41.6C23.6 39.2 34.6 39.8 42.6 44.4" stroke-width="4"/></g></svg>
<div style="position:absolute;left:18.00px;top:1135.60px;width:54.50px;height:2.00px;box-sizing:border-box;background:#cbcbcb;border-radius:1px;"></div>
<div style="position:absolute;left:10.40px;top:1160.00px;width:70.00px;height:69.60px;box-sizing:border-box;background:#fafafa;border:5px solid #b9b9b9;border-radius:15px;"></div>
<svg style="position:absolute;left:25.00px;top:1174.20px;" width="40" height="40" viewBox="0 0 40 40"><g transform="translate(20 20)"><rect x="-3.1" y="-17.6" width="6.2" height="7" rx="1" fill="#a3a3a3" transform="rotate(0)"/><rect x="-3.1" y="-17.6" width="6.2" height="7" rx="1" fill="#a3a3a3" transform="rotate(30)"/><rect x="-3.1" y="-17.6" width="6.2" height="7" rx="1" fill="#a3a3a3" transform="rotate(60)"/><rect x="-3.1" y="-17.6" width="6.2" height="7" rx="1" fill="#a3a3a3" transform="rotate(90)"/><rect x="-3.1" y="-17.6" width="6.2" height="7" rx="1" fill="#a3a3a3" transform="rotate(120)"/><rect x="-3.1" y="-17.6" width="6.2" height="7" rx="1" fill="#a3a3a3" transform="rotate(150)"/><rect x="-3.1" y="-17.6" width="6.2" height="7" rx="1" fill="#a3a3a3" transform="rotate(180)"/><rect x="-3.1" y="-17.6" width="6.2" height="7" rx="1" fill="#a3a3a3" transform="rotate(210)"/><rect x="-3.1" y="-17.6" width="6.2" height="7" rx="1" fill="#a3a3a3" transform="rotate(240)"/><rect x="-3.1" y="-17.6" width="6.2" height="7" rx="1" fill="#a3a3a3" transform="rotate(270)"/><rect x="-3.1" y="-17.6" width="6.2" height="7" rx="1" fill="#a3a3a3" transform="rotate(300)"/><rect x="-3.1" y="-17.6" width="6.2" height="7" rx="1" fill="#a3a3a3" transform="rotate(330)"/><circle r="13.4" fill="#a9a9a9"/><circle r="9.6" fill="#c4c4c4"/><circle r="6.2" fill="#8f8f8f"/><circle r="3.4" fill="#d8d8d8"/></g></svg>
<svg style="position:absolute;left:10.00px;top:1256.00px;" width="72" height="70" viewBox="0 0 72 70"><rect x="3.1" y="3" width="65" height="64" rx="14" fill="none" stroke="#666" stroke-width="2" stroke-dasharray="6.4 4.2"/><path d="M35.5 24V46.6M24.2 35.3H46.8" stroke="#5a5a5a" stroke-width="2.6" stroke-linecap="round"/></svg>
<svg style="position:absolute;left:36.00px;top:1478.00px;" width="20" height="14" viewBox="0 0 20 14"><path d="M4 4L10 9.6L16 4" fill="none" stroke="#6a6a6a" stroke-width="2" stroke-linecap="round" stroke-linejoin="round"/></svg>
<svg style="position:absolute;left:12.00px;top:1512.00px;" width="28" height="30" viewBox="0 0 28 30"><path d="M13.8 4.6C8.8 4.6 6.6 8.6 6.6 12.6V17.4C6.6 19.6 5.2 20.8 4 22.2C3.4 23 3.8 23.8 4.8 23.8H22.8C23.8 23.8 24.2 23 23.6 22.2C22.4 20.8 21 19.6 21 17.4V12.6C21 8.6 18.8 4.6 13.8 4.6Z" fill="none" stroke="#6b6b6b" stroke-width="1.8" stroke-linejoin="round"/><path d="M11.4 25.4C11.8 27.4 15.8 27.4 16.2 25.4" fill="none" stroke="#6b6b6b" stroke-width="1.8" stroke-linecap="round"/><path d="M13.8 4.6V3.4" stroke="#6b6b6b" stroke-width="1.8" stroke-linecap="round"/></svg>
<svg style="position:absolute;left:51.50px;top:1514.70px;" width="26" height="26" viewBox="0 0 26 26"><path d="M10.97 5.05 L11.31 1.83 L14.69 1.83 L15.03 5.05 L17.18 5.95 L19.71 3.91 L22.09 6.29 L20.05 8.82 L20.95 10.97 L24.17 11.31 L24.17 14.69 L20.95 15.03 L20.05 17.18 L22.09 19.71 L19.71 22.09 L17.18 20.05 L15.03 20.95 L14.69 24.17 L11.31 24.17 L10.97 20.95 L8.82 20.05 L6.29 22.09 L3.91 19.71 L5.95 17.18 L5.05 15.03 L1.83 14.69 L1.83 11.31 L5.05 10.97 L5.95 8.82 L3.91 6.29 L6.29 3.91 L8.82 5.95Z" fill="none" stroke="#6b6b6b" stroke-width="1.7" stroke-linejoin="round"/><circle cx="13" cy="13" r="4" fill="none" stroke="#6b6b6b" stroke-width="1.7"/></svg>
<div style="position:absolute;left:69.40px;top:1506.60px;width:16.20px;height:16.20px;box-sizing:border-box;background:rgba(255,235,230,.7);border-radius:50%;"></div>
<div style="position:absolute;left:70.70px;top:1507.90px;width:13.60px;height:13.60px;box-sizing:border-box;background:#f04a33;border-radius:50%;"></div><div id="shadow"></div>
<div id="frame">
<div style="position:absolute;left:101.00px;top:240.00px;width:2441.00px;height:1300.00px;box-sizing:border-box;background:#f0f0f1;"></div>
<div style="position:absolute;left:101.00px;top:291.00px;width:256.00px;height:1250.00px;box-sizing:border-box;background:#1d2327;"></div>
<div style="position:absolute;left:101.00px;top:240.00px;width:2414.00px;height:51.20px;box-sizing:border-box;background:#1d2327;"></div>
<div style="position:absolute;left:2515.00px;top:240.00px;width:27.00px;height:1300.00px;box-sizing:border-box;background:#f1f1f1;"></div>
<div style="position:absolute;left:2515.00px;top:240.00px;width:27.00px;height:807.00px;box-sizing:border-box;background:#d1d1d1;"></div>
<svg style="position:absolute;left:112.50px;top:249.80px;" width="32" height="32" viewBox="0 0 20 20"><circle cx="10" cy="10" r="9.45" fill="none" stroke="#a3a8ad" stroke-width="1.05"/><g transform="translate(10 10) scale(0.885) translate(-10 -10)"><path fill="#a3a8ad" d="M7.78 15.37L4.37 6.22c.55-.02 1.17-.08 1.17-.08.5-.06.44-1.13-.06-1.11 0 0-1.45.11-2.37.11-.18 0-.37 0-.58-.01C4.12 2.69 6.87 1.11 10 1.11c2.33 0 4.45.87 6.05 2.34-.68-.11-1.65.39-1.65 1.58 0 .74.45 1.36.9 2.1.35.61.55 1.36.55 2.46 0 1.49-1.4 5-1.4 5l-3.03-8.37c.54-.02.82-.17.82-.17.5-.05.44-1.25-.06-1.22 0 0-1.44.12-2.38.12-.87 0-2.33-.12-2.33-.12-.5-.03-.56 1.2-.06 1.22l.92.08 1.26 3.41zM17.41 10c.24-.64.74-1.87.43-4.25.7 1.29 1.05 2.71 1.05 4.25 0 3.29-1.73 6.24-4.4 7.78.97-2.59 1.94-5.2 2.92-7.78zM6.1 18.09C3.12 16.65 1.11 13.53 1.11 10c0-1.3.23-2.48.72-3.59C3.25 10.3 4.67 14.2 6.1 18.09zm4.03-6.63l2.58 6.98c-.86.29-1.76.45-2.71.45-.79 0-1.57-.11-2.29-.33.81-2.38 1.62-4.74 2.42-7.1z"/></g></svg>
<svg style="position:absolute;left:168.50px;top:250.00px;" width="32" height="32" viewBox="0 0 20 20"><path fill="#a3a8ad" d="M16 8.5l1.53 1.53-1.06 1.06L10 4.62l-6.47 6.47-1.06-1.06L10 2.5l4 4v-2h2v4zm-6-2.46l6 5.99V18H4v-5.97zM12 17v-5H8v5h4z"/></svg>
<div style="position:absolute;top:256.00px;font-size:20.8px;line-height:1;color:#f0f0f1;white-space:pre;left:209.46px;-webkit-text-stroke:0.35px #f0f0f1;letter-spacing:0.518px;">MouseClickRecording.com</div>
<svg style="position:absolute;left:493.00px;top:250.50px;" width="32" height="32" viewBox="0 0 20 20"><path fill="#a3a8ad" d="M10.2 3.28c3.53 0 6.43 2.61 6.92 6h2.08l-3.5 4-3.5-4h2.32c-.45-1.97-2.21-3.45-4.32-3.45-1.45 0-2.73.71-3.54 1.78L4.95 5.66C6.23 4.2 8.11 3.28 10.2 3.28zm-.4 13.44c-3.52 0-6.43-2.61-6.92-6H.8l3.5-4c1.17 1.33 2.33 2.67 3.5 4H5.48c.45 1.97 2.21 3.45 4.32 3.45 1.45 0 2.73-.71 3.54-1.78l1.71 1.95c-1.28 1.46-3.15 2.38-5.25 2.38z"/></svg>
<div style="position:absolute;top:256.00px;font-size:20.8px;line-height:1;color:#f0f0f1;white-space:pre;left:534.00px;-webkit-text-stroke:0.35px #f0f0f1;">1</div>
<svg style="position:absolute;left:566.50px;top:251.80px;" width="32" height="32" viewBox="0 0 20 20"><path fill="#a3a8ad" d="M5 2h9c1.1 0 2 .9 2 2v7c0 1.1-.9 2-2 2h-2l-5 5v-5H5c-1.1 0-2-.9-2-2V4c0-1.1.9-2 2-2z"/></svg>
<div style="position:absolute;top:256.00px;font-size:20.8px;line-height:1;color:#f0f0f1;white-space:pre;left:609.50px;-webkit-text-stroke:0.35px #f0f0f1;opacity:0.5;">0</div>
<svg style="position:absolute;left:645.50px;top:252.50px;" width="32" height="32" viewBox="0 0 20 20"><path fill="#a3a8ad" d="M17 7v3h-5v5H9v-5H4V7h5V2h3v5h5z"/></svg>
<div style="position:absolute;top:256.00px;font-size:20.8px;line-height:1;color:#f0f0f1;white-space:pre;left:687.46px;-webkit-text-stroke:0.35px #f0f0f1;letter-spacing:0.829px;">New</div>
<div style="position:absolute;top:256.00px;font-size:20.8px;line-height:1;color:#f0f0f1;white-space:pre;left:2327.46px;-webkit-text-stroke:0.35px #f0f0f1;letter-spacing:0.624px;">Howdy, Admin</div>
<div style="position:absolute;left:2476.00px;top:251.00px;width:27.00px;height:27.00px;box-sizing:border-box;background:#c6c7c9;overflow:hidden;"></div>
<svg style="position:absolute;left:2476.00px;top:251.00px;" width="27" height="27" viewBox="0 0 27 27"><circle cx="13.5" cy="10.8" r="5.3" fill="#fff"/><path d="M4.5 27v-3.2c0-3.2 4-5.3 9-5.3s9 2.1 9 5.3V27z" fill="#fff"/></svg>
<svg style="position:absolute;left:113.80px;top:322.10px;" width="32" height="32" viewBox="0 0 20 20"><path fill="#a3a8ad" d="M3.76 16h12.48c1.1-1.37 1.76-3.11 1.76-5 0-4.42-3.58-8-8-8s-8 3.58-8 8c0 1.89.66 3.63 1.76 5zM10 4c.55 0 1 .45 1 1s-.45 1-1 1-1-.45-1-1 .45-1 1-1zM6 6c.55 0 1 .45 1 1s-.45 1-1 1-1-.45-1-1 .45-1 1-1zm8 0c.55 0 1 .45 1 1s-.45 1-1 1-1-.45-1-1 .45-1 1-1zm-5.37 5.55L12 7v6c0 1.1-.9 2-2 2s-2-.9-2-2c0-.57.24-1.08.63-1.45zM4 10c.55 0 1 .45 1 1s-.45 1-1 1-1-.45-1-1 .45-1 1-1zm12 0c.55 0 1 .45 1 1s-.45 1-1 1-1-.45-1-1 .45-1 1-1zm-5 3c0-.55-.45-1-1-1s-1 .45-1 1 .45 1 1 1 1-.45 1-1z"/></svg>
<div style="position:absolute;top:328.00px;font-size:22.4px;line-height:1;color:#f0f0f1;white-space:pre;left:158.38px;-webkit-text-stroke:0.35px #f0f0f1;letter-spacing:0.478px;">Dashboard</div>
<svg style="position:absolute;left:113.80px;top:393.60px;" width="32" height="32" viewBox="0 0 20 20"><path fill="#a3a8ad" d="M10.44 3.02l1.82-1.82 6.36 6.35-1.83 1.82c-1.05-.68-2.48-.57-3.41.36l-.75.75c-.92.93-1.04 2.35-.35 3.41l-1.83 1.82-2.41-2.41-2.8 2.79c-.42.42-3.38 2.71-3.8 2.29s1.86-3.39 2.28-3.81l2.79-2.79L4.1 9.36l1.83-1.82c1.05.69 2.48.57 3.4-.36l.75-.75c.93-.92 1.05-2.35.36-3.41z"/></svg>
<div style="position:absolute;top:400.00px;font-size:22.4px;line-height:1;color:#f0f0f1;white-space:pre;left:158.38px;-webkit-text-stroke:0.35px #f0f0f1;letter-spacing:0.595px;">Posts</div>
<svg style="position:absolute;left:113.80px;top:449.00px;" width="32" height="32" viewBox="0 0 20 20"><path fill="#a3a8ad" d="M13 11V4c0-.55-.45-1-1-1h-1.67L9 1H5L3.67 3H2c-.55 0-1 .45-1 1v7c0 .55.45 1 1 1h10c.55 0 1-.45 1-1zM7 4.5c1.38 0 2.5 1.12 2.5 2.5S8.38 9.5 7 9.5 4.5 8.38 4.5 7 5.62 4.5 7 4.5zM14 6h5v10.5c0 1.38-1.12 2.5-2.5 2.5S14 17.88 14 16.5s1.12-2.5 2.5-2.5c.17 0 .34.02.5.05V9h-3V6zm-4 8.05V13h2v3.5c0 1.38-1.12 2.5-2.5 2.5S7 17.88 7 16.5 8.12 14 9.5 14c.17 0 .34.02.5.05z"/></svg>
<div style="position:absolute;top:454.00px;font-size:22.4px;line-height:1;color:#f0f0f1;white-space:pre;left:158.38px;-webkit-text-stroke:0.35px #f0f0f1;letter-spacing:0.724px;">Media</div>
<svg style="position:absolute;left:113.80px;top:503.10px;" width="32" height="32" viewBox="0 0 20 20"><path fill="#a3a8ad" d="M6 15V2h10v13H6zm-1 1h8v2H3V5h2v11z"/></svg>
<div style="position:absolute;top:509.00px;font-size:22.4px;line-height:1;color:#f0f0f1;white-space:pre;left:158.38px;-webkit-text-stroke:0.35px #f0f0f1;letter-spacing:0.222px;">Pages</div>
<svg style="position:absolute;left:113.80px;top:557.80px;" width="32" height="32" viewBox="0 0 20 20"><path fill="#a3a8ad" d="M5 2h9c1.1 0 2 .9 2 2v7c0 1.1-.9 2-2 2h-2l-5 5v-5H5c-1.1 0-2-.9-2-2V4c0-1.1.9-2 2-2z"/></svg>
<div style="position:absolute;top:564.00px;font-size:22.4px;line-height:1;color:#f0f0f1;white-space:pre;left:158.38px;-webkit-text-stroke:0.35px #f0f0f1;letter-spacing:0.730px;">Comments</div>
<div style="position:absolute;left:101.00px;top:618.50px;width:256.00px;height:55.50px;box-sizing:border-box;background:#2271b1;"></div>
<svg style="position:absolute;left:113.80px;top:630.20px;" width="32" height="32" viewBox="0 0 20 20"><path fill="#fff" d="M14.48 11.06L7.41 3.99l1.5-1.5c.5-.56 2.3-.47 3.51.32 1.21.8 1.43 1.28 2.91 2.1 1.18.64 2.45 1.26 4.45.85zm-.71.71L6.7 4.7 4.93 6.47c-.39.39-.39 1.02 0 1.41l1.06 1.06c.39.39.39 1.03 0 1.42-.6.6-1.43 1.11-2.21 1.69-.35.26-.7.53-1.01.84C1.43 14.23.4 16.08 1.4 17.07c.99 1 2.84-.03 4.18-1.36.31-.31.58-.66.85-1.02.57-.78 1.08-1.61 1.69-2.21.39-.39 1.02-.39 1.41 0l1.06 1.06c.39.39 1.02.39 1.41 0z"/></svg>
<div style="position:absolute;top:637.00px;font-size:22.4px;line-height:1;color:#fff;white-space:pre;left:158.38px;-webkit-text-stroke:0.35px #fff;letter-spacing:0.511px;">Appearance</div>
<svg style="position:absolute;left:344.20px;top:634.20px;" width="12.8" height="25.6" viewBox="0 0 12.8 25.6"><path d="M12.8 0V25.6L0 12.8Z" fill="#f0f0f1"/></svg>
<div style="position:absolute;left:101.00px;top:674.00px;width:256.00px;height:380.50px;box-sizing:border-box;background:#2c3338;"></div>
<div style="position:absolute;top:696.00px;font-size:20.8px;line-height:1;color:#c5c9cd;white-space:pre;left:119.96px;-webkit-text-stroke:0.35px #c5c9cd;letter-spacing:0.826px;">Themes</div>
<div style="position:absolute;top:741.00px;font-size:20.8px;line-height:1;color:#c5c9cd;white-space:pre;left:119.96px;-webkit-text-stroke:0.35px #c5c9cd;letter-spacing:0.604px;">Design</div>
<div style="position:absolute;top:787.00px;font-size:20.8px;line-height:1;color:#c5c9cd;white-space:pre;left:119.96px;-webkit-text-stroke:0.35px #c5c9cd;letter-spacing:0.627px;">Customize</div>
<div style="position:absolute;top:832.00px;font-size:20.8px;line-height:1;color:#fff;white-space:pre;left:119.96px;font-weight:700;letter-spacing:0.678px;">Widgets</div>
<div style="position:absolute;top:877.00px;font-size:20.8px;line-height:1;color:#c5c9cd;white-space:pre;left:119.96px;-webkit-text-stroke:0.35px #c5c9cd;letter-spacing:0.834px;">Menus</div>
<div style="position:absolute;top:922.00px;font-size:20.8px;line-height:1;color:#c5c9cd;white-space:pre;left:119.96px;-webkit-text-stroke:0.35px #c5c9cd;letter-spacing:0.810px;">Header</div>
<div style="position:absolute;top:967.00px;font-size:20.8px;line-height:1;color:#c5c9cd;white-space:pre;left:119.96px;-webkit-text-stroke:0.35px #c5c9cd;letter-spacing:0.695px;">Background</div>
<div style="position:absolute;top:1012.00px;font-size:20.8px;line-height:1;color:#c5c9cd;white-space:pre;left:119.96px;-webkit-text-stroke:0.35px #c5c9cd;letter-spacing:0.351px;">Theme File Editor</div>
<svg style="position:absolute;left:113.80px;top:1065.70px;" width="32" height="32" viewBox="0 0 20 20"><path fill="#a3a8ad" d="M13.11 4.36L9.87 7.6 8 5.73l3.24-3.24c.35-.34 1.05-.2 1.56.32.52.51.66 1.21.31 1.55zm-8 1.77l.91-1.12 9.01 9.01-1.19.84c-.71.71-2.63 1.16-3.82 1.16H6.14L4.9 17.26c-.59.59-1.54.59-2.12 0-.59-.58-.59-1.53 0-2.12l1.24-1.24v-3.88c0-1.13.4-3.19 1.09-3.89zm7.26 3.97l3.24-3.24c.34-.35 1.04-.21 1.55.31.52.51.66 1.21.31 1.55l-3.24 3.25z"/></svg>
<div style="position:absolute;top:1071.00px;font-size:22.4px;line-height:1;color:#f0f0f1;white-space:pre;left:158.38px;-webkit-text-stroke:0.35px #f0f0f1;letter-spacing:0.489px;">Plugins</div>
<svg style="position:absolute;left:113.80px;top:1120.10px;" width="32" height="32" viewBox="0 0 20 20"><path fill="#a3a8ad" d="M10 9.25c-2.27 0-2.73-3.44-2.73-3.44C7 4.02 7.82 2 9.97 2c2.16 0 2.98 2.02 2.71 3.81 0 0-.41 3.44-2.68 3.44zm0 2.57L12.72 10c2.39 0 4.52 2.33 4.52 4.53v2.49s-3.65 1.13-7.24 1.13c-3.65 0-7.24-1.13-7.24-1.13v-2.49c0-2.25 1.94-4.48 4.47-4.48z"/></svg>
<div style="position:absolute;top:1126.00px;font-size:22.4px;line-height:1;color:#f0f0f1;white-space:pre;left:158.38px;-webkit-text-stroke:0.35px #f0f0f1;letter-spacing:0.602px;">Users</div>
<svg style="position:absolute;left:113.80px;top:1174.50px;" width="32" height="32" viewBox="0 0 20 20"><path fill="#a3a8ad" d="M16.68 9.77c-1.34 1.34-3.3 1.67-4.95.99l-5.41 6.52c-.99.99-2.59.99-3.58 0s-.99-2.59 0-3.57l6.52-5.42c-.68-1.65-.35-3.61.99-4.95 1.28-1.28 3.12-1.62 4.72-1.06l-2.89 2.89 2.82 2.82 2.86-2.87c.53 1.58.18 3.39-1.08 4.65zM3.81 16.21c.4.39 1.04.39 1.43 0 .4-.4.4-1.04 0-1.43-.39-.4-1.03-.4-1.43 0-.39.39-.39 1.03 0 1.43z"/></svg>
<div style="position:absolute;top:1180.00px;font-size:22.4px;line-height:1;color:#f0f0f1;white-space:pre;left:158.38px;-webkit-text-stroke:0.35px #f0f0f1;letter-spacing:0.903px;">Tools</div>
<svg style="position:absolute;left:113.80px;top:1228.90px;" width="32" height="32" viewBox="0 0 20 20"><path fill="#a3a8ad" d="M18 16V4c0-.55-.45-1-1-1H3c-.55 0-1 .45-1 1v12c0 .55.45 1 1 1h14c.55 0 1-.45 1-1zM8 11h1c.55 0 1 .45 1 1s-.45 1-1 1H8v1.5c0 .28-.22.5-.5.5s-.5-.22-.5-.5V13H6c-.55 0-1-.45-1-1s.45-1 1-1h1V5.5c0-.28.22-.5.5-.5s.5.22.5.5V11zm5-2h-1c-.55 0-1-.45-1-1s.45-1 1-1h1V5.5c0-.28.22-.5.5-.5s.5.22.5.5V7h1c.55 0 1 .45 1 1s-.45 1-1 1h-1v5.5c0 .28-.22.5-.5.5s-.5-.22-.5-.5V9z"/></svg>
<div style="position:absolute;top:1235.00px;font-size:22.4px;line-height:1;color:#f0f0f1;white-space:pre;left:158.38px;-webkit-text-stroke:0.35px #f0f0f1;letter-spacing:0.852px;">Settings</div>
<div style="position:absolute;left:243.50px;top:1068.50px;width:28.00px;height:28.00px;box-sizing:border-box;background:#d63638;border-radius:14px;"></div>
<div style="position:absolute;top:1075.00px;font-size:17.6px;line-height:1;color:#fff;white-space:pre;left:252.61px;-webkit-text-stroke:0.35px #fff;">1</div>
<svg style="position:absolute;left:113.80px;top:1283.50px;" width="32" height="32" viewBox="0 0 20 20"><path fill="#a3a8ad" d="M10 2.16c4.33 0 7.84 3.51 7.84 7.84s-3.51 7.84-7.84 7.84S2.16 14.33 2.16 10 5.67 2.16 10 2.16zm2 11.72V6.12L6.18 9.97z"/></svg>
<div style="position:absolute;top:1289.00px;font-size:20.8px;line-height:1;color:#b1b5b9;white-space:pre;left:158.46px;-webkit-text-stroke:0.35px #b1b5b9;letter-spacing:0.460px;">Collapse Menu</div>
<div style="position:absolute;top:329.00px;font-size:36.8px;line-height:1;color:#1d2327;white-space:pre;left:391.66px;-webkit-text-stroke:0.35px #1d2327;letter-spacing:0.282px;">Widgets</div>
<div style="position:absolute;left:538.50px;top:322.50px;width:284.00px;height:48.00px;box-sizing:border-box;background:#f6f7f7;border:1px solid #2f7ab6;border-radius:5px;"></div>
<div style="position:absolute;top:337.00px;font-size:20.8px;line-height:1;color:#2271b1;white-space:pre;left:555.46px;-webkit-text-stroke:0.35px #2271b1;letter-spacing:0.397px;">Manage with Live Preview</div>
<div style="position:absolute;top:304.00px;font-size:20.8px;line-height:1;color:#2271b1;white-space:pre;left:2100.96px;-webkit-text-stroke:0.35px #2271b1;letter-spacing:0.498px;text-decoration:underline;text-decoration-thickness:1.3px;text-underline-offset:3px;">Enable accessibility mode</div>
<div style="position:absolute;left:2363.00px;top:291.00px;width:120.50px;height:47.50px;box-sizing:border-box;background:#fff;border:1px solid #d2d3d6;border-top:none;border-radius:0 0 6.4px 6.4px;"></div>
<div style="position:absolute;top:304.00px;font-size:20.8px;line-height:1;color:#646970;white-space:pre;left:2387.46px;-webkit-text-stroke:0.35px #646970;letter-spacing:0.830px;">Help</div>
<svg style="position:absolute;left:2444.15px;top:309.95px;" width="12.5" height="8.5" viewBox="0 0 12.5 8.5"><path d="M0 0H12.5L6.25 8.5Z" fill="#6a6d70"/></svg>
<div style="position:absolute;top:418.00px;font-size:27.2px;line-height:1;color:#1d2327;white-space:pre;left:392.14px;font-weight:700;letter-spacing:-0.325px;">Available Widgets</div>
<div style="position:absolute;top:472.00px;font-size:20.8px;line-height:1;color:#50575e;white-space:pre;left:392.46px;-webkit-text-stroke:0.35px #50575e;letter-spacing:0.530px;">To activate a widget drag it to a sidebar or click on it. To deactivate a widget and</div>
<div style="position:absolute;top:504.00px;font-size:20.8px;line-height:1;color:#50575e;white-space:pre;left:392.46px;-webkit-text-stroke:0.35px #50575e;letter-spacing:0.627px;">delete its settings, drag it back.</div>
<div style="position:absolute;left:393.20px;top:553.10px;width:389.50px;height:70.40px;box-sizing:border-box;background:#f6f7f7;border:1px solid #cfd0d3;box-shadow:0 1.6px 1.6px rgba(0,0,0,.04);"></div>
<div style="position:absolute;top:579.00px;font-size:20.8px;line-height:1;color:#1d2327;white-space:pre;left:417.16px;font-weight:700;letter-spacing:0.057px;">Archives</div>
<svg style="position:absolute;left:740.70px;top:584.25px;" width="13" height="8.5" viewBox="0 0 13 8.5"><path d="M0 0H13L6.5 8.5Z" fill="#787c82"/></svg>
<div style="position:absolute;top:645.00px;font-size:19.2px;line-height:1;color:#646970;white-space:pre;left:416.24px;-webkit-text-stroke:0.35px #646970;letter-spacing:0.624px;">A monthly archive of your site’s</div>
<div style="position:absolute;top:674.00px;font-size:19.2px;line-height:1;color:#646970;white-space:pre;left:416.24px;-webkit-text-stroke:0.35px #646970;letter-spacing:0.556px;">Posts.</div>
<div style="position:absolute;left:798.20px;top:553.10px;width:389.50px;height:70.40px;box-sizing:border-box;background:#f6f7f7;border:1px solid #cfd0d3;box-shadow:0 1.6px 1.6px rgba(0,0,0,.04);"></div>
<div style="position:absolute;top:579.00px;font-size:20.8px;line-height:1;color:#1d2327;white-space:pre;left:822.16px;font-weight:700;letter-spacing:-0.162px;">Audio</div>
<svg style="position:absolute;left:1145.70px;top:584.25px;" width="13" height="8.5" viewBox="0 0 13 8.5"><path d="M0 0H13L6.5 8.5Z" fill="#787c82"/></svg>
<div style="position:absolute;top:645.00px;font-size:19.2px;line-height:1;color:#646970;white-space:pre;left:821.24px;-webkit-text-stroke:0.35px #646970;letter-spacing:0.403px;">Displays an audio player.</div>
<div style="position:absolute;left:393.20px;top:714.10px;width:389.50px;height:70.40px;box-sizing:border-box;background:#f6f7f7;border:1px solid #cfd0d3;box-shadow:0 1.6px 1.6px rgba(0,0,0,.04);"></div>
<div style="position:absolute;top:740.00px;font-size:20.8px;line-height:1;color:#1d2327;white-space:pre;left:417.16px;font-weight:700;letter-spacing:-0.093px;">Block</div>
<svg style="position:absolute;left:740.70px;top:745.25px;" width="13" height="8.5" viewBox="0 0 13 8.5"><path d="M0 0H13L6.5 8.5Z" fill="#787c82"/></svg>
<div style="position:absolute;top:806.00px;font-size:19.2px;line-height:1;color:#646970;white-space:pre;left:416.24px;-webkit-text-stroke:0.35px #646970;letter-spacing:0.692px;">A widget containing a block.</div>
<div style="position:absolute;left:798.20px;top:714.10px;width:389.50px;height:70.40px;box-sizing:border-box;background:#f6f7f7;border:1px solid #cfd0d3;box-shadow:0 1.6px 1.6px rgba(0,0,0,.04);"></div>
<div style="position:absolute;top:740.00px;font-size:20.8px;line-height:1;color:#1d2327;white-space:pre;left:822.16px;font-weight:700;letter-spacing:0.394px;">Calendar</div>
<svg style="position:absolute;left:1145.70px;top:745.25px;" width="13" height="8.5" viewBox="0 0 13 8.5"><path d="M0 0H13L6.5 8.5Z" fill="#787c82"/></svg>
<div style="position:absolute;top:806.00px;font-size:19.2px;line-height:1;color:#646970;white-space:pre;left:821.24px;-webkit-text-stroke:0.35px #646970;letter-spacing:0.615px;">A calendar of your site’s posts.</div>
<div style="position:absolute;left:393.20px;top:845.30px;width:389.50px;height:70.40px;box-sizing:border-box;background:#f6f7f7;border:1px solid #cfd0d3;box-shadow:0 1.6px 1.6px rgba(0,0,0,.04);"></div>
<div style="position:absolute;top:871.00px;font-size:20.8px;line-height:1;color:#1d2327;white-space:pre;left:417.16px;font-weight:700;letter-spacing:0.363px;">Categories</div>
<svg style="position:absolute;left:740.70px;top:876.45px;" width="13" height="8.5" viewBox="0 0 13 8.5"><path d="M0 0H13L6.5 8.5Z" fill="#787c82"/></svg>
<div style="position:absolute;top:937.00px;font-size:19.2px;line-height:1;color:#646970;white-space:pre;left:416.24px;-webkit-text-stroke:0.35px #646970;letter-spacing:0.685px;">A list or dropdown of categories.</div>
<div style="position:absolute;left:798.20px;top:845.30px;width:389.50px;height:70.40px;box-sizing:border-box;background:#f6f7f7;border:1px solid #cfd0d3;box-shadow:0 1.6px 1.6px rgba(0,0,0,.04);"></div>
<div style="position:absolute;top:871.00px;font-size:20.8px;line-height:1;color:#1d2327;white-space:pre;left:822.16px;font-weight:700;letter-spacing:0.331px;">Custom HTML</div>
<svg style="position:absolute;left:1145.70px;top:876.45px;" width="13" height="8.5" viewBox="0 0 13 8.5"><path d="M0 0H13L6.5 8.5Z" fill="#787c82"/></svg>
<div style="position:absolute;top:937.00px;font-size:19.2px;line-height:1;color:#646970;white-space:pre;left:821.24px;-webkit-text-stroke:0.35px #646970;letter-spacing:0.679px;">Arbitrary HTML code.</div>
<div style="position:absolute;left:393.20px;top:977.10px;width:389.50px;height:70.40px;box-sizing:border-box;background:#f6f7f7;border:1px solid #cfd0d3;box-shadow:0 1.6px 1.6px rgba(0,0,0,.04);"></div>
<div style="position:absolute;top:1003.00px;font-size:20.8px;line-height:1;color:#1d2327;white-space:pre;left:417.16px;font-weight:700;letter-spacing:0.205px;">Gallery</div>
<svg style="position:absolute;left:740.70px;top:1008.25px;" width="13" height="8.5" viewBox="0 0 13 8.5"><path d="M0 0H13L6.5 8.5Z" fill="#787c82"/></svg>
<div style="position:absolute;top:1069.00px;font-size:19.2px;line-height:1;color:#646970;white-space:pre;left:416.24px;-webkit-text-stroke:0.35px #646970;letter-spacing:0.418px;">Displays an image gallery.</div>
<div style="position:absolute;left:798.20px;top:977.10px;width:389.50px;height:70.40px;box-sizing:border-box;background:#f6f7f7;border:1px solid #cfd0d3;box-shadow:0 1.6px 1.6px rgba(0,0,0,.04);"></div>
<div style="position:absolute;top:1003.00px;font-size:20.8px;line-height:1;color:#1d2327;white-space:pre;left:822.16px;font-weight:700;letter-spacing:0.663px;">Image</div>
<svg style="position:absolute;left:1145.70px;top:1008.25px;" width="13" height="8.5" viewBox="0 0 13 8.5"><path d="M0 0H13L6.5 8.5Z" fill="#787c82"/></svg>
<div style="position:absolute;top:1069.00px;font-size:19.2px;line-height:1;color:#646970;white-space:pre;left:821.24px;-webkit-text-stroke:0.35px #646970;letter-spacing:0.378px;">Displays an image.</div>
<div style="position:absolute;left:393.20px;top:1108.75px;width:389.50px;height:70.40px;box-sizing:border-box;background:#f6f7f7;border:1px solid #cfd0d3;box-shadow:0 1.6px 1.6px rgba(0,0,0,.04);"></div>
<div style="position:absolute;top:1134.00px;font-size:20.8px;line-height:1;color:#1d2327;white-space:pre;left:417.16px;font-weight:700;letter-spacing:1.293px;">Meta</div>
<svg style="position:absolute;left:740.70px;top:1139.90px;" width="13" height="8.5" viewBox="0 0 13 8.5"><path d="M0 0H13L6.5 8.5Z" fill="#787c82"/></svg>
<div style="position:absolute;top:1201.00px;font-size:19.2px;line-height:1;color:#646970;white-space:pre;left:416.24px;-webkit-text-stroke:0.35px #646970;letter-spacing:0.316px;">Login, RSS, &amp; WordPress.org links.</div>
<div style="position:absolute;left:798.20px;top:1108.75px;width:389.50px;height:70.40px;box-sizing:border-box;background:#f6f7f7;border:1px solid #cfd0d3;box-shadow:0 1.6px 1.6px rgba(0,0,0,.04);"></div>
<div style="position:absolute;top:1134.00px;font-size:20.8px;line-height:1;color:#1d2327;white-space:pre;left:822.16px;font-weight:700;letter-spacing:0.311px;">Navigation Menu</div>
<svg style="position:absolute;left:1145.70px;top:1139.90px;" width="13" height="8.5" viewBox="0 0 13 8.5"><path d="M0 0H13L6.5 8.5Z" fill="#787c82"/></svg>
<div style="position:absolute;top:1201.00px;font-size:19.2px;line-height:1;color:#646970;white-space:pre;left:821.24px;-webkit-text-stroke:0.35px #646970;letter-spacing:0.507px;">Add a navigation menu to your</div>
<div style="position:absolute;top:1230.00px;font-size:19.2px;line-height:1;color:#646970;white-space:pre;left:821.24px;-webkit-text-stroke:0.35px #646970;letter-spacing:0.626px;">sidebar.</div>
<div style="position:absolute;left:393.20px;top:1269.75px;width:389.50px;height:70.40px;box-sizing:border-box;background:#f6f7f7;border:1px solid #cfd0d3;box-shadow:0 1.6px 1.6px rgba(0,0,0,.04);"></div>
<div style="position:absolute;top:1295.00px;font-size:20.8px;line-height:1;color:#1d2327;white-space:pre;left:417.16px;font-weight:700;letter-spacing:0.246px;">Pages</div>
<svg style="position:absolute;left:740.70px;top:1300.90px;" width="13" height="8.5" viewBox="0 0 13 8.5"><path d="M0 0H13L6.5 8.5Z" fill="#787c82"/></svg>
<div style="position:absolute;top:1362.00px;font-size:19.2px;line-height:1;color:#646970;white-space:pre;left:416.24px;-webkit-text-stroke:0.35px #646970;letter-spacing:0.526px;">A list of your site’s Pages.</div>
<div style="position:absolute;left:798.20px;top:1269.75px;width:389.50px;height:70.40px;box-sizing:border-box;background:#f6f7f7;border:1px solid #cfd0d3;box-shadow:0 1.6px 1.6px rgba(0,0,0,.04);"></div>
<div style="position:absolute;top:1295.00px;font-size:20.8px;line-height:1;color:#1d2327;white-space:pre;left:822.16px;font-weight:700;letter-spacing:0.261px;">Recent Comments</div>
<svg style="position:absolute;left:1145.70px;top:1300.90px;" width="13" height="8.5" viewBox="0 0 13 8.5"><path d="M0 0H13L6.5 8.5Z" fill="#787c82"/></svg>
<div style="position:absolute;top:1362.00px;font-size:19.2px;line-height:1;color:#646970;white-space:pre;left:821.24px;-webkit-text-stroke:0.35px #646970;letter-spacing:0.633px;">Your site’s most recent comments.</div>
<div style="position:absolute;left:393.20px;top:1401.25px;width:389.50px;height:70.40px;box-sizing:border-box;background:#f6f7f7;border:1px solid #cfd0d3;box-shadow:0 1.6px 1.6px rgba(0,0,0,.04);"></div>
<div style="position:absolute;top:1427.00px;font-size:20.8px;line-height:1;color:#1d2327;white-space:pre;left:417.16px;font-weight:700;letter-spacing:0.090px;">Recent Posts</div>
<svg style="position:absolute;left:740.70px;top:1432.40px;" width="13" height="8.5" viewBox="0 0 13 8.5"><path d="M0 0H13L6.5 8.5Z" fill="#787c82"/></svg>
<div style="position:absolute;top:1493.00px;font-size:19.2px;line-height:1;color:#646970;white-space:pre;left:416.24px;-webkit-text-stroke:0.35px #646970;letter-spacing:0.561px;">Your site’s most recent Posts.</div>
<div style="position:absolute;left:798.20px;top:1401.25px;width:389.50px;height:70.40px;box-sizing:border-box;background:#f6f7f7;border:1px solid #cfd0d3;box-shadow:0 1.6px 1.6px rgba(0,0,0,.04);"></div>
<div style="position:absolute;top:1427.00px;font-size:20.8px;line-height:1;color:#1d2327;white-space:pre;left:822.16px;font-weight:700;letter-spacing:-0.250px;">RSS</div>
<svg style="position:absolute;left:1145.70px;top:1432.40px;" width="13" height="8.5" viewBox="0 0 13 8.5"><path d="M0 0H13L6.5 8.5Z" fill="#787c82"/></svg>
<div style="position:absolute;top:1493.00px;font-size:19.2px;line-height:1;color:#646970;white-space:pre;left:821.24px;-webkit-text-stroke:0.35px #646970;letter-spacing:0.409px;">Entries from any RSS or Atom feed.</div>
<div style="position:absolute;left:393.20px;top:1532.25px;width:389.50px;height:70.40px;box-sizing:border-box;background:#f6f7f7;border:1px solid #cfd0d3;box-shadow:0 1.6px 1.6px rgba(0,0,0,.04);"></div>
<div style="position:absolute;left:798.20px;top:1532.25px;width:389.50px;height:70.40px;box-sizing:border-box;background:#f6f7f7;border:1px solid #cfd0d3;box-shadow:0 1.6px 1.6px rgba(0,0,0,.04);"></div>
<div style="position:absolute;left:1271.00px;top:390.00px;width:594.00px;height:577.30px;box-sizing:border-box;background:#fff;border:1px solid #d6d7da;box-shadow:0 1.6px 1.6px rgba(0,0,0,.04);"></div>
<div style="position:absolute;top:423.00px;font-size:27.2px;line-height:1;color:#1d2327;white-space:pre;left:1294.64px;font-weight:700;letter-spacing:0.007px;">Sidebar</div>
<svg style="position:absolute;left:1809.50px;top:425.75px;" width="13" height="8.5" viewBox="0 0 13 8.5"><path d="M0 8.5H13L6.5 0Z" fill="#787c82"/></svg>
<div style="position:absolute;top:478.00px;font-size:20.8px;line-height:1;color:#646970;white-space:pre;left:1294.96px;-webkit-text-stroke:0.35px #646970;letter-spacing:0.489px;">Add widgets here to appear in your sidebar.</div>
<div style="position:absolute;left:1285.00px;top:527.50px;width:566.50px;height:423.50px;box-sizing:border-box;background:#fff;border:1px solid #cfd0d3;box-shadow:0 1.6px 1.6px rgba(0,0,0,.04);"></div>
<div style="position:absolute;left:1286.00px;top:528.50px;width:564.50px;height:69.00px;box-sizing:border-box;background:#f6f7f7;border-bottom:1px solid #d3d4d7;"></div>
<div style="position:absolute;top:553.00px;font-size:20.8px;line-height:1;color:#1d2327;white-space:pre;left:1309.46px;font-weight:700;letter-spacing:0.080px;">Tag Cloud</div>
<svg style="position:absolute;left:1809.50px;top:557.75px;" width="13" height="8.5" viewBox="0 0 13 8.5"><path d="M0 8.5H13L6.5 0Z" fill="#787c82"/></svg>
<div style="position:absolute;top:628.00px;font-size:20.8px;line-height:1;color:#3c434a;white-space:pre;left:1309.46px;-webkit-text-stroke:0.35px #3c434a;letter-spacing:0.793px;">Title:</div>
<div style="position:absolute;left:1309.50px;top:653.50px;width:517.00px;height:48.00px;box-sizing:border-box;background:#fff;border:1px solid #8f9297;border-radius:6.4px;"></div>
<div style="position:absolute;top:667.00px;font-size:22.4px;line-height:1;color:#2c3338;white-space:pre;left:1323.38px;-webkit-text-stroke:0.35px #2c3338;letter-spacing:0.363px;">Tags</div>
<div style="position:absolute;top:729.00px;font-size:20.8px;line-height:1;color:#3c434a;white-space:pre;left:1309.46px;-webkit-text-stroke:0.35px #3c434a;letter-spacing:0.399px;">Taxonomy:</div>
<div style="position:absolute;left:1309.50px;top:755.80px;width:517.00px;height:47.60px;box-sizing:border-box;background:#fff;border:1px solid #8f9297;border-radius:6.4px;"></div>
<div style="position:absolute;top:770.00px;font-size:22.4px;line-height:1;color:#2c3338;white-space:pre;left:1323.38px;-webkit-text-stroke:0.35px #2c3338;letter-spacing:0.363px;">Tags</div>
<svg style="position:absolute;left:1795.00px;top:773.00px;" width="19" height="13" viewBox="0 0 19 13"><path d="M2 2.5L9.5 10L17 2.5" fill="none" stroke="#1d2327" stroke-width="3"/></svg>
<div style="position:absolute;left:1309.60px;top:829.80px;width:25.00px;height:24.60px;box-sizing:border-box;background:#fff;border:1px solid #8f9297;border-radius:6.4px;"></div>
<div style="position:absolute;top:832.00px;font-size:20.8px;line-height:1;color:#3c434a;white-space:pre;left:1346.76px;-webkit-text-stroke:0.35px #3c434a;letter-spacing:0.570px;">Show tag counts</div>
<div style="position:absolute;top:882.00px;font-size:20.8px;line-height:1;color:#b32d2e;white-space:pre;left:1308.56px;-webkit-text-stroke:0.35px #b32d2e;letter-spacing:0.729px;text-decoration:underline;text-decoration-thickness:1.3px;text-underline-offset:3px;">Delete</div>
<div style="position:absolute;left:1745.80px;top:878.60px;width:80.80px;height:47.60px;box-sizing:border-box;background:#2271b1;border-radius:5px;"></div>
<div style="position:absolute;top:893.00px;font-size:20.8px;line-height:1;color:#fff;white-space:pre;left:1762.57px;-webkit-text-stroke:0.35px #fff;letter-spacing:-0.047px;">Save</div>
<div style="position:absolute;left:1271.00px;top:984.30px;width:594.00px;height:90.20px;box-sizing:border-box;background:#fff;border:1px solid #d6d7da;box-shadow:0 1.6px 1.6px rgba(0,0,0,.04);"></div>
<div style="position:absolute;top:1016.00px;font-size:27.2px;line-height:1;color:#1d2327;white-space:pre;left:1295.04px;font-weight:700;letter-spacing:-0.416px;">Content Bottom 1</div>
<svg style="position:absolute;left:1809.80px;top:1020.35px;" width="13" height="8.5" viewBox="0 0 13 8.5"><path d="M0 0H13L6.5 8.5Z" fill="#787c82"/></svg>
<div style="position:absolute;left:1889.00px;top:390.30px;width:594.20px;height:90.00px;box-sizing:border-box;background:#fff;border:1px solid #d6d7da;box-shadow:0 1.6px 1.6px rgba(0,0,0,.04);"></div>
<div style="position:absolute;top:423.00px;font-size:27.2px;line-height:1;color:#1d2327;white-space:pre;left:1913.64px;font-weight:700;letter-spacing:-0.189px;">Content Bottom 2</div>
<svg style="position:absolute;left:2428.00px;top:425.75px;" width="13" height="8.5" viewBox="0 0 13 8.5"><path d="M0 0H13L6.5 8.5Z" fill="#787c82"/></svg>
<div style="position:absolute;left:1894.00px;top:542.00px;width:592.40px;height:390.30px;box-sizing:border-box;background:#000;border-radius:3px;"></div>
<div style="position:absolute;top:561.00px;font-size:33px;line-height:1;color:#fff;white-space:pre;left:1911.95px;font-weight:700;letter-spacing:-0.348px;-webkit-text-stroke:0.55px #fff;">By this point in this course, you</div>
<div style="position:absolute;top:600.00px;font-size:33px;line-height:1;color:#fff;white-space:pre;left:1911.95px;font-weight:700;letter-spacing:0.191px;-webkit-text-stroke:0.55px #fff;">should already be familiar with</div>
<div style="position:absolute;top:639.00px;font-size:33px;line-height:1;color:#fff;white-space:pre;left:1911.95px;font-weight:700;letter-spacing:0.470px;-webkit-text-stroke:0.55px #fff;">widgets.</div>
<div style="position:absolute;top:717.00px;font-size:33px;line-height:1;color:#fff;white-space:pre;left:1911.95px;font-weight:700;letter-spacing:-0.205px;-webkit-text-stroke:0.55px #fff;">There is a tag cloud widget.</div>
<div style="position:absolute;top:795.00px;font-size:33px;line-height:1;color:#fff;white-space:pre;left:1911.95px;font-weight:700;letter-spacing:0.120px;-webkit-text-stroke:0.55px #fff;">In the widgets (dashboard area),</div>
<div style="position:absolute;top:834.00px;font-size:33px;line-height:1;color:#fff;white-space:pre;left:1911.95px;font-weight:700;letter-spacing:-0.441px;-webkit-text-stroke:0.55px #fff;">you can see that a tag cloud is</div>
<div style="position:absolute;top:873.00px;font-size:33px;line-height:1;color:#fff;white-space:pre;left:1911.95px;font-weight:700;letter-spacing:-0.151px;-webkit-text-stroke:0.55px #fff;">going to be put in the sidebar</div>
</div>
</div>
</body></html>
